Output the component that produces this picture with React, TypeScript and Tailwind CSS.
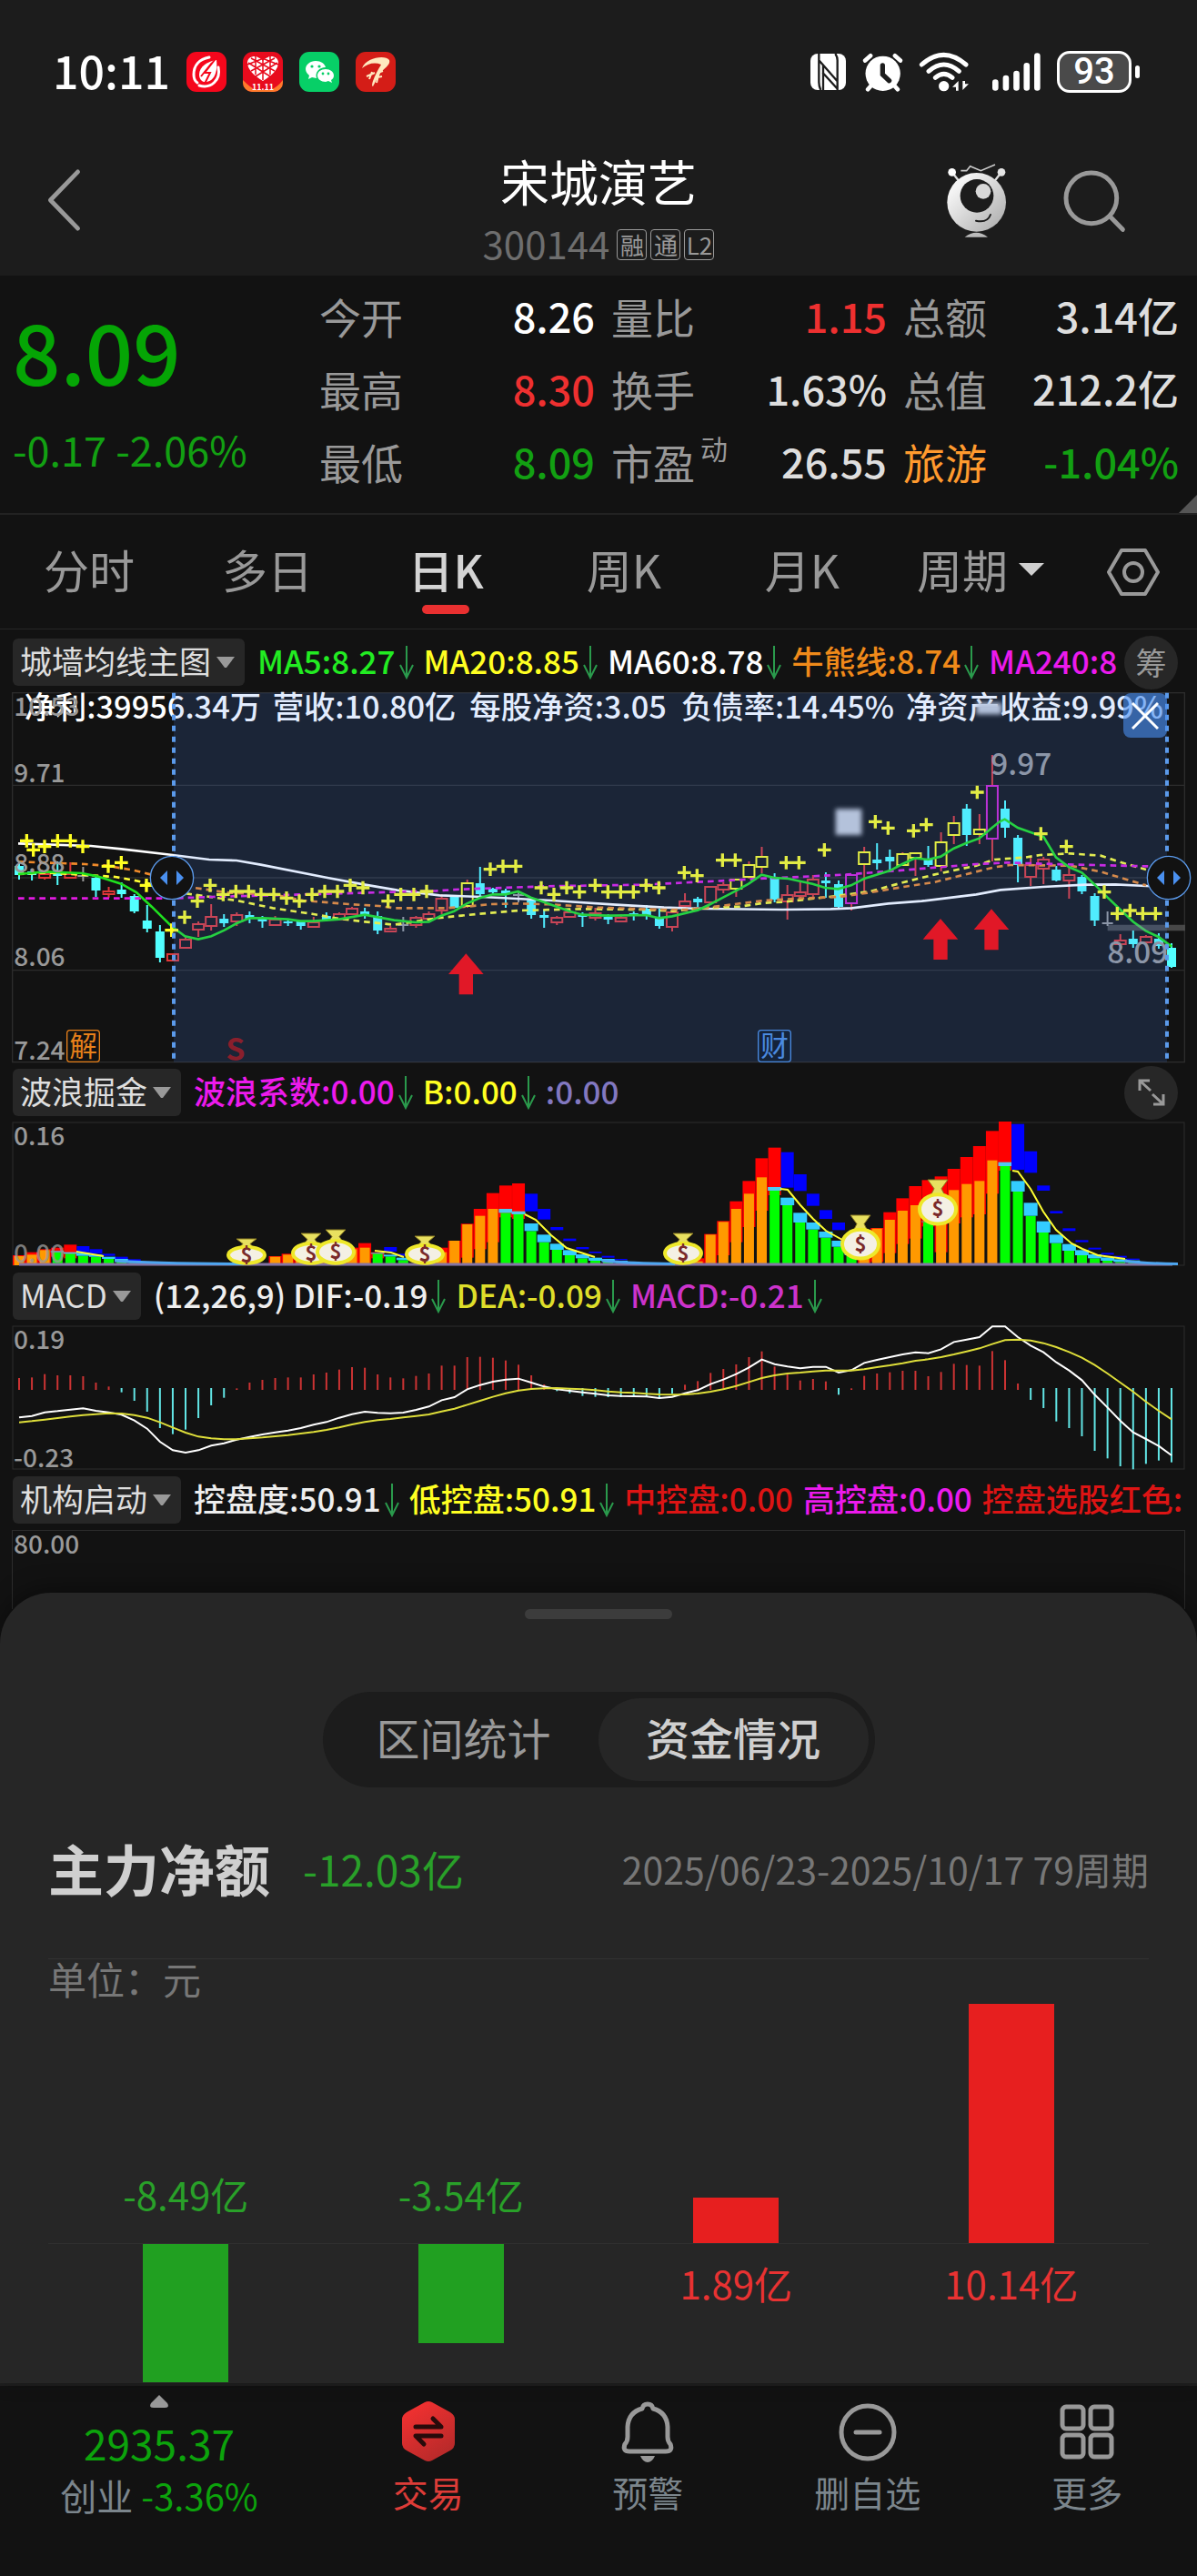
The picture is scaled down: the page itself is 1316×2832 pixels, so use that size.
import type { ReactNode } from "react";

const QUOTES = [
  { label: "今开", value: "8.26", color: "text-white" },
  { label: "量比", value: "1.15", color: "text-[#ee3030]" },
  { label: "总额", value: "3.14亿", color: "text-[#dedede]" },
  { label: "最高", value: "8.30", color: "text-[#ee3030]" },
  { label: "换手", value: "1.63%", color: "text-[#dedede]" },
  { label: "总值", value: "212.2亿", color: "text-[#dedede]" },
  { label: "最低", value: "8.09", color: "text-[#12a012]" },
  { label: "市盈", sup: "动", value: "26.55", color: "text-[#dedede]" },
  { label: "旅游", hot: true, value: "-1.04%", color: "text-[#12a012]" },
];

const TABS = ["分时", "多日", "日K", "周K", "月K"];

const REPORT = [
  { x: 80, text: "净利:39956.34万" },
  { x: 899, text: "营收:10.80亿" },
  { x: 1549, text: "每股净资:3.05" },
  { x: 2247, text: "负债率:14.45%" },
  { x: 2988, text: "净资产收益:9.99%" },
];

// kind, body top, body bottom, wick top, wick bottom
type Candle = [string, number, number, number, number];
const CANDLES: Candle[] = [
  ["c", 952, 962, 948, 967], ["c", 958, 962, 955, 968], ["r", 960, 965, 957, 967], ["c", 957, 963, 947, 973],
  ["r", 960, 965, 948, 965], ["g", 963, 964, 953, 969], ["c", 965, 979, 963, 986], ["r", 979, 983, 975, 987],
  ["c", 978, 983, 970, 987], ["c", 985, 1002, 983, 1004], ["c", 1012, 1021, 995, 1025], ["c", 1024, 1053, 1017, 1058],
  ["r", 1048, 1056, 1048, 1056], ["r", 1032, 1042, 1030, 1043], ["r", 1015, 1022, 1013, 1030], ["r", 1007, 1018, 994, 1023],
  ["c", 1010, 1015, 1005, 1019], ["r", 1005, 1013, 1003, 1018], ["c", 1006, 1010, 1002, 1015], ["c", 1010, 1013, 1007, 1020],
  ["r", 1010, 1017, 1007, 1017], ["c", 1013, 1015, 1010, 1018], ["c", 1013, 1018, 1012, 1022], ["r", 1013, 1019, 1008, 1020],
  ["c", 1007, 1011, 1003, 1013], ["r", 1004, 1011, 1003, 1012], ["r", 998, 1005, 997, 1006], ["c", 1002, 1007, 998, 1010],
  ["c", 1007, 1023, 1002, 1027], ["r", 1020, 1024, 1018, 1024], ["g", 1017, 1018, 1008, 1024], ["r", 1008, 1017, 1007, 1020],
  ["r", 1004, 1010, 1002, 1012], ["r", 987, 1001, 983, 1005], ["c", 986, 998, 986, 998], ["y", 970, 996, 967, 998],
  ["c", 971, 983, 953, 985], ["c", 977, 981, 976, 983], ["c", 979, 983, 977, 998], ["g", 984, 985, 980, 992],
  ["c", 990, 1006, 987, 1010], ["c", 1006, 1009, 1000, 1020], ["r", 1008, 1014, 1007, 1017], ["r", 1002, 1008, 1000, 1008],
  ["c", 1006, 1008, 1003, 1019], ["r", 1003, 1009, 998, 1012], ["c", 1008, 1011, 1005, 1016], ["r", 1008, 1013, 1005, 1014],
  ["c", 1004, 1007, 1002, 1012], ["c", 999, 1006, 995, 1011], ["c", 1008, 1018, 999, 1021], ["r", 1002, 1019, 1002, 1024],
  ["r", 990, 996, 982, 998], ["c", 988, 992, 986, 997], ["r", 974, 992, 974, 993], ["r", 972, 978, 970, 982],
  ["y", 966, 977, 966, 986], ["y", 950, 964, 947, 966], ["y", 941, 953, 931, 960], ["c", 965, 989, 960, 992],
  ["r", 983, 991, 973, 1011], ["r", 980, 985, 970, 987], ["r", 966, 983, 962, 987], ["c", 968, 971, 959, 987],
  ["c", 972, 997, 968, 1000], ["m", 961, 993, 961, 1001], ["y", 936, 950, 931, 980], ["c", 945, 949, 927, 956],
  ["c", 942, 947, 934, 957], ["y", 938, 951, 937, 952], ["y", 937, 943, 937, 963], ["c", 945, 951, 930, 953],
  ["y", 925, 952, 915, 958], ["y", 904, 918, 897, 928], ["c", 889, 918, 884, 930], ["y", 911, 917, 895, 928],
  ["m", 863, 922, 830, 947], ["c", 889, 910, 880, 921], ["c", 921, 951, 918, 970], ["r", 950, 964, 942, 974],
  ["r", 944, 955, 942, 972], ["c", 956, 968, 952, 969], ["r", 961, 968, 952, 988], ["c", 964, 980, 962, 983],
  ["c", 985, 1012, 982, 1018], ["g", 1015, 1016, 1002, 1018], ["r", 1033, 1038, 1027, 1042], ["c", 1032, 1038, 1023, 1042],
  ["r", 1029, 1036, 1028, 1038], ["c", 1032, 1040, 1026, 1043], ["c", 1042, 1063, 1037, 1064],
];

const PLUSES = [
  [88, 703], [110, 733], [147, 722], [190, 703], [232, 703], [273, 722], [357, 787], [400, 775], [483, 850], [566, 998],
  [609, 955], [651, 902], [693, 850], [736, 880], [778, 870], [820, 870], [861, 880], [903, 880], [945, 892], [987, 902],
  [1029, 880], [1071, 870], [1113, 870], [1155, 850], [1197, 858], [1280, 902], [1322, 880], [1365, 880], [1407, 870],
  [1617, 797], [1659, 787], [1701, 787], [1785, 858], [1827, 880], [1869, 858], [1911, 872], [1963, 850], [2005, 872],
  [2047, 872], [2089, 872], [2131, 850], [2173, 858], [2257, 808], [2299, 818], [2383, 767], [2425, 767], [2593, 775],
  [2635, 775], [2719, 733], [2887, 640], [2929, 661], [3013, 670], [3055, 650], [3223, 543], [3433, 680], [3517, 722],
  [3642, 872], [3685, 943], [3727, 933], [3769, 943], [3811, 943],
];

const MA60 =
  "60,712 300,720 400,730 570,750 690,765 780,768 860,782 1080,825 1200,847 1310,866 1450,883 1590,888 1820,900 2020,913 2190,923 2320,927 2580,930 2740,928 2810,925 2930,910 3040,902 3140,890 3220,880 3300,865 3440,855 3580,848 3680,847 3780,852 3860,855";
const MA5 =
  "60,813 150,805 270,810 320,820 400,845 450,873 500,920 566,985 610,1018 654,1028 697,1018 740,998 781,975 823,958 870,958 950,962 992,968 1034,968 1118,962 1203,947 1300,965 1372,972 1415,970 1455,950 1498,935 1540,910 1582,892 1625,880 1667,880 1709,870 1751,890 1794,905 1836,920 1878,935 1920,947 2005,950 2131,948 2173,958 2217,952 2301,932 2343,912 2385,890 2427,868 2469,845 2512,815 2554,825 2600,828 2680,845 2722,858 2764,862 2807,850 2850,828 2934,802 2976,780 3018,760 3061,765 3103,755 3146,728 3188,710 3230,695 3272,660 3297,640 3314,632 3357,660 3442,690 3483,758 3526,790 3568,808 3611,848 3653,890 3695,930 3737,970 3779,1000 3821,1020 3864,1052";
const MA20 =
  "60,813 150,808 270,815 380,822 440,833 520,850 620,878 780,900 900,925 1034,945 1118,960 1203,970 1300,980 1440,958 1570,945 1710,933 1920,928 2120,930 2220,935 2320,925 2440,920 2520,908 2580,905 2760,885 2870,870 2980,840 3080,815 3220,785 3280,765 3380,758 3430,750 3530,745 3630,752 3700,775 3780,798";
const BULL =
  "60,772 280,780 350,785 440,800 500,815 640,858 760,875 900,880 1000,900 1150,912 1250,918 1300,925 1470,925 1540,920 1620,912 1710,910 1820,913 1970,923 2170,930 2270,930 2360,920 2520,900 2640,893 2770,888 2860,875 2980,855 3080,840 3180,815 3280,790 3330,783 3530,785 3630,805 3780,850";
const MA240 =
  "60,893 560,893 700,888 1000,880 1190,875 1440,868 1520,863 1800,853 2120,848 2380,835 2520,827 2640,822 2780,815 2980,800 3220,780 3320,775 3480,780 3780,787 3864,790";

// index, red top, orange top
const RISES = [
  [0, 660, 663], [1, 650, 658], [2, 640, 643], [20, 663, 665], [21, 655, 658], [22, 650, 655], [24, 640, 650], [25, 645, 650],
  [26, 635, 640], [27, 620, 635], [33, 635, 650], [34, 612, 612], [35, 556, 558], [36, 507, 530], [37, 455, 507],
  [53, 670, 680], [54, 590, 592], [55, 547, 550], [56, 482, 507], [57, 415, 457], [58, 340, 403], [66, 650, 665],
  [67, 570, 572], [68, 518, 543], [69, 472, 513], [70, 432, 495], [72, 400, 540], [73, 375, 445], [74, 336, 425],
  [75, 300, 415], [76, 250, 347],
];
// index, red top, cyan top, cyan bottom
const PEAKS = [
  [3, 635, 646, 650], [4, 625, 650, 655], [28, 650, 652, 655], [38, 430, 507, 520], [39, 423, 515, 525],
  [59, 305, 435, 447], [71, 412, 548, 550], [77, 219, 353, 366],
];
// index, blue top, blue bottom, cyan top, cyan bottom
const FALLS = [
  [5, 630, 650, 652, 662], [6, 640, 655, 658, 665], [7, 655, 662, 665, 672], [8, 665, 672, 672, 680], [9, 673, 678, 678, 685],
  [29, 633, 648, 658, 664], [30, 655, 662, 668, 676], [40, 457, 515, 555, 580], [41, 507, 542, 592, 617],
  [42, 567, 577, 622, 642], [43, 605, 613, 643, 660], [44, 633, 640, 657, 670], [45, 648, 653, 668, 678],
  [46, 662, 668, 672, 680], [47, 672, 676, 678, 684], [60, 320, 437, 470, 495], [61, 393, 448, 520, 552],
  [62, 457, 497, 552, 575], [63, 511, 540, 582, 602], [64, 552, 577, 612, 632], [65, 620, 624, 645, 660],
  [78, 227, 378, 415, 450], [79, 317, 388, 487, 530], [80, 430, 447, 548, 585], [81, 514, 522, 592, 620],
  [82, 571, 580, 623, 645], [83, 610, 617, 643, 660], [84, 635, 641, 657, 670], [85, 652, 658, 667, 678],
  [86, 662, 668, 673, 682], [87, 671, 675, 677, 684],
];
const BAGS = [
  [271, 1362, 1389], [342, 1356, 1389], [369, 1352, 1389], [467, 1359, 1389], [751, 1356, 1389], [946, 1336, 1384], [1031, 1297, 1346],
];

const HIST = [
  375, 373, 362, 366, 366, 369, 390, 403, 422, 450, 486, 540, 560, 545, 507, 465, 440, 409, 390, 381, 375, 373, 373, 363, 357,
  347, 339, 341, 363, 373, 376, 368, 360, 334, 334, 306, 305, 308, 317, 331, 366, 396, 418, 425, 434, 437, 438, 438, 436, 436,
  440, 426, 397, 385, 358, 345, 330, 306, 287, 337, 363, 383, 378, 386, 430, 409, 368, 360, 356, 351, 351, 369, 355, 328, 332,
  334, 286, 316, 393, 447, 474, 518, 540, 567, 615, 640, 666, 676, 658, 647, 653,
];
const DIF = [
  505, 500, 488, 484, 479, 475, 483, 488, 496, 515, 542, 585, 613, 621, 613, 598, 590, 578, 569, 561, 554, 548, 540, 529, 520,
  506, 494, 486, 490, 491, 489, 480, 469, 448, 438, 412, 398, 387, 380, 377, 390, 403, 412, 417, 422, 427, 432, 434, 435, 436,
  441, 437, 425, 415, 395, 380, 362, 340, 314, 329, 337, 343, 338, 338, 357, 349, 325, 315, 306, 297, 290, 293, 280, 256, 248,
  240, 205, 205, 240, 268, 290, 323, 350, 382, 430, 472, 516, 554, 576, 599, 630,
];
const DEA = [
  521, 517, 512, 507, 502, 497, 494, 491, 492, 497, 506, 521, 538, 555, 568, 574, 577, 577, 574, 571, 567, 563, 558, 553, 546,
  538, 528, 520, 514, 510, 505, 500, 495, 485, 476, 463, 450, 437, 425, 416, 411, 409, 408, 410, 412, 415, 419, 422, 424, 427,
  429, 430, 429, 426, 420, 412, 401, 388, 375, 366, 360, 357, 353, 350, 350, 350, 346, 339, 333, 326, 318, 313, 306, 297, 287,
  277, 263, 250, 248, 251, 260, 273, 289, 308, 332, 360, 390, 420, 453, 483, 511,
];

const FLOWS = [
  { value: "-8.49亿", height: 170 },
  { value: "-3.54亿", height: 109 },
  { value: "1.89亿", height: 50 },
  { value: "10.14亿", height: 264 },
];

const dayX = (i: number) => 21 + 14.078 * i;

function StatusBar() {
  return (
    <div className="flex items-center justify-between pt-[53px] pr-[63px] pl-[58px]">
      <div className="flex items-center gap-[18px]">
        <span className="pb-[6px] text-[50px] leading-[46px] font-medium text-white">10:11</span>
        <svg viewBox="0 0 44 44" className="h-11 w-11">
          <rect width="44" height="44" rx="11" fill="#f5071c" />
          <path d="M25 6C14 8 8 15 8 25c0 4 1 7 4 9M14 37c13 4 24-6 21-20" fill="none" stroke="#fff" strokeWidth="3" strokeLinecap="round" />
          <path d="M33 9c-9 1-19 7-19 16 0 4 2 7 5 8 8 1 16-6 14-24z" fill="#fff" />
          <path d="M34 5 20 23h6l-6 12M28 12l-12 15" fill="none" stroke="#f5071c" strokeWidth="2" />
        </svg>
        <svg viewBox="0 0 44 44" className="h-11 w-11">
          <rect width="44" height="44" rx="11" fill="#e80b1d" />
          <path d="M0 31q8 8 14 11h16q8-3 14-11v3a10 10 0 0 1-10 10H10A10 10 0 0 1 0 34z" fill="#ff7a2c" />
          <path d="M22 32C12 26 5 19 5 12c0-8 12-10 17-2 5-8 17-6 17 2 0 7-7 14-17 20z" fill="#fff" />
          <path d="M6 12l24 15M9 7l26 14M16 5l23 9M38 12 14 27M35 7 9 21M28 5 5 14M22 5v26M14 5v20M30 5v20" stroke="#e80b1d" strokeWidth="1.500" fill="none" />
          <text x="22" y="42" textAnchor="middle" fontSize="9" fontWeight="700" fill="#fff">11.11</text>
        </svg>
        <svg viewBox="0 0 44 44" className="h-11 w-11">
          <rect width="44" height="44" rx="11" fill="#07cf67" />
          <path d="M18 10c-6 0-11 4-11 9 0 3 2 5 4 7l-1 4 4-2 5 1c-2-7 3-12 10-12-1-4-5-7-11-7z" fill="#fff" />
          <path d="M29 19c-5 0-9 3-9 7s4 7 9 7l3-1 4 2-1-3c2-1 3-3 3-5 0-4-4-7-9-7z" fill="#fff" />
          <circle cx="14" cy="16" r="1.6" fill="#07cf67" /><circle cx="22" cy="16" r="1.6" fill="#07cf67" />
          <circle cx="26" cy="24" r="1.4" fill="#07cf67" /><circle cx="32" cy="24" r="1.4" fill="#07cf67" />
        </svg>
        <svg viewBox="0 0 44 44" className="h-11 w-11">
          <rect width="44" height="44" rx="11" fill="#d41d17" />
          <path d="M7 18C11 6 33 3 37 9c2 6-7 9-11 16l-7 13c-3-1 3-14 9-24-7-3-15-1-21 4z" fill="#ffe9bf" />
          <path d="M12 27l9-4M18 22l-3 8M24 23l6-2M24 28l5-1M26 22l-3 12" fill="none" stroke="#ffe9bf" strokeWidth="2" />
        </svg>
      </div>
      <div className="flex items-center">
        <svg viewBox="0 0 117 120" className="h-10 w-[39px]">
          <rect width="117" height="120" rx="24" fill="#fff" />
          <path d="M28 0v94q0 14 6 26M28 22l62 70M42 40v80M82 0q7 10 7 22v98M40 62l50 55" fill="none" stroke="#1c1c1c" strokeWidth="7" />
        </svg>
        <svg viewBox="213 52 135 130" className="ml-[18px] h-[43px] w-[45px]">
          <path d="M222 78l18-16M339 78l-18-16M243 160l-12 14M318 160l12 14" stroke="#fff" strokeWidth="14" strokeLinecap="round" />
          <circle cx="281" cy="121" r="58" fill="#fff" />
          <path d="M280 94v30l22 21" fill="none" stroke="#1c1c1c" strokeWidth="16" strokeLinecap="round" />
        </svg>
        <svg viewBox="400 48 168 132" className="ml-[17px] h-11 w-14">
          <g fill="none" stroke="#fff" strokeWidth="15" strokeLinecap="round">
            <path d="M410 90q72-64 146 0M433 112q50-44 100 0M455 133q28-24 56 0" />
          </g>
          <circle cx="483" cy="161" r="17" fill="#fff" />
          <path d="M511 164l20-20v32h-8v-12zM565 154l-20 20v-30h8v10z" fill="#fff" />
        </svg>
        <svg viewBox="0 0 160 126" className="ml-[25px] h-[42px] w-[53px]">
          <path d="M10 98v18M45 84v32M80 69v47M114 43v73M149 10v106" stroke="#fff" strokeWidth="20" strokeLinecap="round" />
        </svg>
        <div className="ml-[18px] flex h-[46px] w-[82px] items-center justify-center rounded-[14px] border-[3px] border-white bg-[#4a4a4a] font-['Roboto',sans-serif] text-[40px] leading-[40px] font-medium text-white">93</div>
        <div className="ml-1 h-[14px] w-[5px] rounded-full bg-white" />
      </div>
    </div>
  );
}

function TitleBar() {
  return (
    <div className="grid grid-cols-[1fr_auto_1fr] items-start px-[50px] pt-[62px] pb-1">
      <button aria-label="返回" className="justify-self-start pt-[18px]">
        <svg viewBox="0 0 40 72" className="h-[70px] w-10">
          <path d="M36 4 5 36l31 32" fill="none" stroke="#999" strokeWidth="5" strokeLinecap="round" strokeLinejoin="round" />
        </svg>
      </button>
      <div className="flex flex-col items-center">
        <h1 className="text-[54px] leading-[64px] font-normal text-white">宋城演艺</h1>
        <div className="mt-1 flex items-center gap-1">
          <span className="mr-1 text-[42px] leading-[64px] text-[#6e6e6e]">300144</span>
          {["融", "通", "L2"].map((t) => (
            <span key={t} className="mt-1 flex h-[34px] w-[33px] items-center justify-center rounded-[4px] border border-[#999] text-[26px] leading-[26px] text-[#999]">{t}</span>
          ))}
        </div>
      </div>
      <div className="mr-7 flex items-center gap-[62px] justify-self-end pt-[13px]">
        <button aria-label="助手">
          <svg viewBox="498 418 196 246" className="h-[82px] w-[66px]">
            <defs>
              <linearGradient id="bot" x1="0" y1="0" x2="1" y2="1">
                <stop offset="0.2" stopColor="#f4f4f4" />
                <stop offset="1" stopColor="#a8a8a8" />
              </linearGradient>
            </defs>
            <path d="M514 446l22 28M677 446l-22 28" stroke="#ddd" strokeWidth="7" />
            <circle cx="514" cy="446" r="13" fill="#fff" /><circle cx="677" cy="446" r="13" fill="#e4e4e4" />
            <path d="M543 441h19l12-15 35 15 47-20" fill="none" stroke="#ccc" strokeWidth="5" />
            <circle cx="595" cy="545" r="97" fill="url(#bot)" />
            <circle cx="596" cy="524" r="55" fill="#1c1c1c" />
            <circle cx="617" cy="509" r="25" fill="#d8d8d8" />
            <path d="M593 606q38 8 48-20" fill="none" stroke="#1c1c1c" strokeWidth="6" strokeLinecap="round" />
            <path d="M556 660q38-30 76 0z" fill="#bbb" />
          </svg>
        </button>
        <button aria-label="搜索">
          <svg viewBox="880 438 208 208" className="h-[69px] w-[69px]">
            <circle cx="973" cy="531" r="84" fill="none" stroke="#999" strokeWidth="15" />
            <path d="M1035 592l42 43" stroke="#999" strokeWidth="15" strokeLinecap="round" />
          </svg>
        </button>
      </div>
    </div>
  );
}

function Down() {
  return (
    <svg viewBox="0 0 16 37" className="mt-1 h-[37px] w-4 shrink-0">
      <path d="M8 0v34M1 21l7 14 7-14" fill="none" stroke="#2a9a4c" strokeWidth="2" />
    </svg>
  );
}

type Item = { text: string; color: string; down?: boolean };

function PanelHeader({ name, items, children }: { name: string; items: Item[]; children?: ReactNode }) {
  return (
    <div className="flex items-center gap-[14px] py-[7px] pl-[14px]">
      <button className="flex h-[52px] shrink-0 items-center gap-[5px] rounded-md bg-[#272727] pr-[10px] pb-1 pl-2 text-[35px] leading-[48px] text-[#dedede]">
        {name}
        <svg viewBox="0 0 22 13" className="mt-1 h-[13px] w-[22px]"><path d="M1 0h20L12 12h-2z" fill="#999" /></svg>
      </button>
      <ul className="flex h-[52px] min-w-0 flex-1 items-center gap-[11px] overflow-hidden pb-1 text-[35px] leading-[48px] font-medium whitespace-nowrap">
        {items.map((it) => (
          <li key={it.text} className={`flex shrink-0 items-center gap-1 ${it.color}`}>
            {it.text}
            {it.down && <Down />}
          </li>
        ))}
      </ul>
      {children}
    </div>
  );
}

function Handle({ x }: { x: number }) {
  return (
    <g transform={`translate(${x} 825)`}>
      <circle r="71" fill="#121212" stroke="#5b9aeb" strokeWidth="4" />
      <path d="M-39 0l24-24v48zM39 0 15-24v48z" fill="#4a90f0" />
    </g>
  );
}

const HOLLOW: Record<string, string> = { r: "#e03838", y: "#ffff22", m: "#d022d0" };

function CandleChart() {
  return (
    <svg viewBox="39 213 3870 1221" className="block w-full overflow-visible">
      <g fill="none" stroke="#2c2c2c" strokeWidth="4">
        <rect x="41" y="215" width="3866" height="1218" />
        <path d="M41 520h3866M41 825h3866M41 1130h3866" />
      </g>
      <g fontSize="103" fontWeight="500" fill="#fff">
        {REPORT.map((r) => <text key={r.text} x={r.x} y="299">{r.text}</text>)}
      </g>
      <g transform="translate(0 -2070) scale(3)">
        {CANDLES.map(([kind, top, bottom, high, low], i) => {
          const x = dayX(i);
          if (kind === "g") return <path key={i} d={`M${x} ${high}V${low}M${x - 6} ${top}h12`} stroke="#999" strokeWidth="2" />;
          if (kind === "c")
            return (
              <g key={i} fill="#52ffff">
                <rect x={x - 1} y={high} width="2" height={low - high} />
                <rect x={x - 5} y={top} width="10" height={bottom - top} />
              </g>
            );
          return (
            <g key={i} fill="none" strokeWidth="2">
              <path d={`M${x} ${high}V${top}M${x} ${bottom}V${low}`} stroke="#e03838" />
              <rect x={x - 6} y={top + 1} width="12" height={bottom - top - 1} stroke={HOLLOW[kind]} />
            </g>
          );
        })}
      </g>
      <g fill="none" strokeWidth="8">
        <polyline points={MA60} stroke="#fff" />
        <polyline points={MA20} stroke="#ffff33" strokeDasharray="20 15" />
        <polyline points={BULL} stroke="#f08a2a" strokeDasharray="20 15" />
        <polyline points={MA240} stroke="#e01ae0" strokeDasharray="20 15" />
        <polyline points={MA5} stroke="#1fe01f" />
      </g>
      <path d={PLUSES.map(([x, y]) => `M${x - 22} ${y}h44M${x} ${y - 22}v44`).join("")} stroke="#ffff22" strokeWidth="10" />
      <g fontSize="84" fontWeight="500" fill="#999">
        <text x="46" y="290">10.53</text>
        <text x="46" y="510">9.71</text>
        <text x="46" y="808">8.88</text>
        <text x="46" y="1117">8.06</text>
        <text x="46" y="1424">7.24</text>
      </g>
      <g fontSize="100" fontWeight="500" fill="#999">
        <text x="3268" y="487">9.97</text>
        <text x="3652" y="1108">8.09</text>
      </g>
      <path d="M3653 990h255" stroke="#999" strokeOpacity="0.4" strokeWidth="20" />
      <defs>
        <filter id="soft"><feGaussianBlur stdDeviation="8" /></filter>
      </defs>
      <g fill="#c9cdd6" filter="url(#soft)">
        <rect x="2756" y="598" width="86" height="86" />
        <rect x="3220" y="248" width="84" height="38" />
      </g>
      <rect x="573" y="215" width="3276" height="1218" fill="#4a89f9" fillOpacity="0.16" />
      <text x="745" y="1428" fontSize="102" fontWeight="700" fill="#8a1f2c">S</text>
      <g fill="#e11827">
        {[[1537, 1075], [3102, 960], [3270, 928]].map(([x, y]) => (
          <path key={x} d={`M${x} ${y}l58 68h-35v67h-46v-67h-35z`} />
        ))}
      </g>
      <path d="M573 215V1433M3849 215V1433" stroke="#5b9aeb" strokeWidth="12" strokeDasharray="18 18" />
      <g fontSize="92" textAnchor="middle" strokeWidth="4">
        <rect x="221" y="1328" width="107" height="104" rx="10" fill="#121212" stroke="#e8801a" />
        <text x="275" y="1413" fill="#e8801a">解</text>
        <rect x="2501" y="1328" width="107" height="104" rx="10" fill="#14233a" stroke="#4a8ae0" />
        <text x="2555" y="1413" fill="#4a8ae0">财</text>
      </g>
      <Handle x={567} />
      <Handle x={3855} />
    </svg>
  );
}

function WaveChart() {
  const y = (v: number) => 1160 + v / 3;
  const bar = (key: string, i: number, top: number, bottom: number, w: number, fill: string) => (
    <rect key={key} x={dayX(i) - w / 2} y={y(top)} width={w} height={(bottom - top) / 3} fill={fill} />
  );
  return (
    <svg viewBox="13 1234 1290 158" className="block w-full overflow-visible">
      <rect x="14" y="1234" width="1288" height="157" fill="none" stroke="#2c2c2c" />
      {RISES.map(([i, red, orange]) => [
        bar(`r${i}`, i, red, Math.min(orange + 110, 693), 14, "#f00"),
        bar(`o${i}`, i, orange, 693, 11, "#ff9900"),
      ])}
      {PEAKS.map(([i, red, top, bottom]) => [
        bar(`r${i}`, i, red, bottom + 15, 14, "#f00"),
        bar(`g${i}`, i, bottom, 693, 11, "#0f0"),
        bar(`c${i}`, i, top, bottom, 15, "#50c8f0"),
      ])}
      {FALLS.map(([i, b1, b2, c1, c2]) => [
        bar(`b${i}`, i, b1, b2, 14, "#00f"),
        bar(`g${i}`, i, c2, 693, 11, "#0f0"),
        bar(`c${i}`, i, c1, c2, 15, "#33ccff"),
      ])}
      <path d="M21 1390h1268" stroke="#8474a4" strokeWidth="3" />
      <path d="M126 1386q40 3 142 3.500M662 1386q30 3 80 3.500M1236 1386q20 3 59 3.500" fill="none" stroke="#4da6f0" strokeWidth="3" />
      <g fill="none" stroke="#ffff33" strokeWidth="2">
        <path d="M84 1376l30 5M412 1375l18 2 14 5M577 1335l12 6 17 17 17 14 31 10" />
        <path d="M858 1307l8 1 14 17 14 15 14 13 18 10M1113 1287l6 1 14 19 14 25 14 20 17 15 12 6 17 7 30 4" />
      </g>
      {BAGS.map(([x, top, bottom]) => {
        const h = bottom - top;
        return (
          <g key={x}>
            <path d={`M${x - 11} ${top}h22l-7 ${h * 0.2} 5 ${h * 0.2}h-18l5 ${-h * 0.2}z`} fill="#e8e060" stroke="#8a7a20" strokeWidth="1" />
            <ellipse cx={x} cy={bottom - h * 0.34} rx="20" ry={h * 0.33} fill="#f4f0e4" stroke="#eee82a" strokeWidth="4" />
            <text x={x} y={bottom - h * 0.34 + 8} textAnchor="middle" fontSize="22" fontWeight="700" fill="#7a2a2a">$</text>
          </g>
        );
      })}
      <g fontSize="28" fontWeight="500" fill="#999">
        <text x="15" y="1259">0.16</text>
        <text x="15" y="1388" fillOpacity="0.8">0.00</text>
      </g>
    </svg>
  );
}

function MacdChart() {
  const points = (vals: number[]) => vals.map((v, i) => `${dayX(i)},${1390 + v / 3}`).join(" ");
  return (
    <svg viewBox="13 1458 1290 158" className="block w-full overflow-visible">
      <rect x="14" y="1458" width="1288" height="157" fill="none" stroke="#2c2c2c" />
      {HIST.map((v, i) =>
        v < 412 ? (
          <path key={i} d={`M${dayX(i)} ${1390 + v / 3}V1528`} stroke="#cc3333" strokeWidth="2" />
        ) : (
          <path key={i} d={`M${dayX(i)} 1526V${1390 + v / 3}`} stroke="#62e6e6" strokeWidth="2" />
        )
      )}
      <polyline points={points(DIF)} fill="none" stroke="#fff" strokeWidth="2" />
      <polyline points={points(DEA)} fill="none" stroke="#dede3a" strokeWidth="2" />
      <g fontSize="28" fontWeight="500" fill="#999">
        <text x="15" y="1483">0.19</text>
        <text x="15" y="1613">-0.23</text>
      </g>
    </svg>
  );
}

function FlowSheet() {
  return (
    <section className="relative -mt-[18px] flex-1 rounded-t-[56px] bg-[#262626] px-[53px] pt-[18px] shadow-[0_-6px_24px_rgba(0,0,0,0.35)]">
      <div className="mx-auto h-[11px] w-[162px] rounded-full bg-[#3c3c3c]" />
      <div className="mx-auto mt-20 flex w-fit rounded-full bg-[#1c1c1c] p-[7px]">
        <button className="h-[91px] w-[296px] rounded-full pb-2 text-[48px] leading-[76px] text-[#999]">区间统计</button>
        <button className="h-[91px] w-[297px] rounded-full bg-[#262626] pb-2 text-[48px] leading-[76px] font-medium text-[#cfcfcf]">资金情况</button>
      </div>
      <div className="mt-[45px] flex items-center justify-between">
        <div className="flex items-center">
          <h2 className="text-[61px] leading-[88px] font-bold text-[#cfcfcf]">主力净额</h2>
          <span className="ml-9 text-[46px] leading-[88px] text-[#29a029]">-12.03亿</span>
        </div>
        <span className="text-[41px] leading-[88px] text-[#777]">2025/06/23-2025/10/17 79周期</span>
      </div>
      <div className="mt-[55px] border-t border-[#323232] pb-2 text-[42px] leading-[41px] text-[#777]">单位：元</div>
      <div className="grid grid-cols-4">
        {FLOWS.map((f) => {
          const out = f.value.startsWith("-");
          return (
            <div key={f.value} className="flex flex-col items-center text-[42px] leading-[60px]">
              <div className="flex h-[264px] w-full flex-col items-center justify-end border-b border-[#2f2f2f]">
                {out ? (
                  <span className="mb-6 text-[#29a029]">{f.value}</span>
                ) : (
                  <div className="w-[94px] bg-[#e71f1f]" style={{ height: f.height }} />
                )}
              </div>
              <div className="flex h-[152px] w-full flex-col items-center overflow-hidden">
                {out ? (
                  <div className="w-[94px] shrink-0 bg-[#21a021]" style={{ height: f.height }} />
                ) : (
                  <span className="mt-[13px] text-[#e83232]">{f.value}</span>
                )}
              </div>
            </div>
          );
        })}
      </div>
    </section>
  );
}

function NavButton({ label, color, children }: { label: string; color: string; children: ReactNode }) {
  return (
    <button className={`flex flex-1 flex-col items-center gap-1 text-[39px] leading-[56px] ${color}`}>
      {children}
      {label}
    </button>
  );
}

function BottomNav() {
  return (
    <nav className="flex h-[212px] shrink-0 items-start border-t-[3px] border-[#1f1f1f] bg-[#121212] pt-2">
      <a href="#index" className="flex w-[350px] flex-col items-center">
        <svg viewBox="0 0 24 14" className="mt-[2px] h-[14px] w-6"><path d="M12 0l9 9q3 5-3 5H6q-6 0-3-5z" fill="#999" /></svg>
        <span className="mt-2 text-[46px] leading-[60px] text-[#0ca30c]">2935.37</span>
        <span className="text-[40px] leading-[56px] whitespace-pre text-[#7b858c]">创业 <span className="text-[#0ca30c]">-3.36%</span></span>
      </a>
      <NavButton label="交易" color="text-[#dd3c38]">
        <svg viewBox="0 0 60 68" className="mt-2 h-[68px] w-[60px]">
          <defs>
            <linearGradient id="trade" x1="0" y1="0" x2="0.6" y2="1">
              <stop offset="0.2" stopColor="#ee3030" />
              <stop offset="1" stopColor="#b82a2a" />
            </linearGradient>
          </defs>
          <path d="M26 2q4-2 8 0l20 11q5 3 5 8v26q0 5-5 8L34 66q-4 2-8 0L6 55q-5-3-5-8V21q0-5 5-8z" fill="url(#trade)" />
          <path d="M16 29h28l-9-9M44 39H16l9 9" fill="none" stroke="#280b0b" strokeWidth="5" strokeLinecap="round" strokeLinejoin="round" />
        </svg>
      </NavButton>
      <NavButton label="预警" color="text-[#7b858c]">
        <svg viewBox="0 0 60 68" className="mt-2 h-[68px] w-[60px]">
          <path d="M30 4q5 0 6 5 15 4 16 20v11q0 5 3 8 3 8-5 8H10q-8 0-5-8 3-3 3-8V29Q9 13 24 9q1-5 6-5z" fill="none" stroke="#999" strokeWidth="5" strokeLinejoin="round" />
          <path d="M22 61h16q-3 7-8 7t-8-7z" fill="#999" />
        </svg>
      </NavButton>
      <NavButton label="删自选" color="text-[#7b858c]">
        <svg viewBox="0 0 68 68" className="mt-2 h-[68px] w-[68px]">
          <circle cx="34" cy="35" r="29" fill="none" stroke="#999" strokeWidth="5" />
          <path d="M21 35h26" stroke="#999" strokeWidth="5" strokeLinecap="round" />
        </svg>
      </NavButton>
      <NavButton label="更多" color="text-[#7b858c]">
        <svg viewBox="0 0 68 68" className="mt-2 h-[68px] w-[68px]">
          <g fill="none" stroke="#999" strokeWidth="5">
            <rect x="7" y="7" width="23" height="24" rx="4" /><rect x="38" y="7" width="23" height="24" rx="4" />
            <rect x="7" y="38" width="23" height="24" rx="4" /><rect x="38" y="38" width="23" height="24" rx="4" />
          </g>
        </svg>
      </NavButton>
    </nav>
  );
}

export default function App() {
  return (
    <div className="flex min-h-screen flex-col overflow-hidden bg-[#121212] font-['Noto_Sans_CJK_SC',sans-serif]">
      <header className="bg-[#1c1c1c]">
        <StatusBar />
        <TitleBar />
      </header>

      {/* quote summary */}
      <section className="relative flex border-b-2 border-[#222] pt-[4px] pb-[17px] pr-5">
        <div className="w-[351px] shrink-0 pl-[14px]">
          <div className="mt-[13px] text-[92px] leading-[128px] font-medium text-[#05a505]">8.09</div>
          <div className="mt-[14px] text-[45px] leading-[64px] whitespace-nowrap text-[#12a012]">-0.17 -2.06%</div>
        </div>
        <dl className="grid flex-1 grid-cols-3 gap-x-[18px] text-[46px] leading-[80px]">
          {QUOTES.map((q) => (
            <div key={q.label} className="flex justify-between whitespace-nowrap">
              <dt className={`flex items-start gap-[6px] ${q.hot ? "text-[#ff9a2e]" : "text-[#999]"}`}>
                {q.label}
                {q.sup && <span className="text-[30px] leading-[50px]">{q.sup}</span>}
              </dt>
              <dd className={`text-[45px] leading-[80px] font-medium ${q.color}`}>{q.value}</dd>
            </div>
          ))}
        </dl>
        <svg viewBox="0 0 20 20" className="absolute right-0 bottom-0 h-5 w-5"><path d="M20 0v20H0z" fill="#555" /></svg>
      </section>

      {/* period tabs */}
      <div className="flex border-b border-[#262626]">
        {TABS.map((t) => (
          <button key={t} className={`flex h-[125px] flex-[196] flex-col items-center pt-[21px] text-[50px] leading-[76px] ${t === "日K" ? "font-medium text-[#d4d4d4]" : "text-[#999]"}`}>
            {t}
            {t === "日K" && <span className="mt-[2px] h-[10px] w-[52px] rounded-full bg-[#e93030]" />}
          </button>
        ))}
        <button className="flex h-[125px] flex-[196] items-start justify-center gap-3 pt-[21px] text-[50px] leading-[76px] text-[#999]">
          周期
          <svg viewBox="0 0 28 14" className="mt-8 h-[14px] w-7"><path d="M0 0h28L14 14z" fill="#cfcfcf" /></svg>
        </button>
        <button aria-label="设置" className="flex h-[125px] flex-[140] items-center justify-center">
          <svg viewBox="0 0 58 52" className="h-[52px] w-[58px]">
            <path d="M16 2h26l14 24-14 24H16L2 26z" fill="none" stroke="#999" strokeWidth="4" strokeLinejoin="round" />
            <circle cx="29" cy="26" r="10" fill="none" stroke="#999" strokeWidth="4" />
          </svg>
        </button>
      </div>

      <main>
        <div className="pt-[3px]">
          <PanelHeader
            name="城墙均线主图"
            items={[
              { text: "MA5:8.27", color: "text-[#22ec22]", down: true },
              { text: "MA20:8.85", color: "text-[#ffff22]", down: true },
              { text: "MA60:8.78", color: "text-white", down: true },
              { text: "牛熊线:8.74", color: "text-[#f08a1a]", down: true },
              { text: "MA240:8", color: "text-[#ec1aec]" },
            ]}
          >
            <button className="-my-1 mr-[21px] -ml-[14px] flex h-[59px] w-[59px] shrink-0 items-center justify-center rounded-full bg-[#272727] text-[34px] leading-[50px] text-[#999]">筹</button>
          </PanelHeader>
          <div className="relative mx-[13px]">
            <CandleChart />
            <button aria-label="关闭" className="absolute top-px right-5 flex h-[49px] w-12 items-center justify-center rounded-lg bg-[#4a90f0]/60">
              <svg viewBox="0 0 30 30" className="h-[30px] w-[30px]"><path d="M1 1l28 28M29 1 1 29" stroke="#fff" strokeWidth="3" /></svg>
            </button>
          </div>
        </div>

        <PanelHeader
          name="波浪掘金"
          items={[
            { text: "波浪系数:0.00", color: "text-[#ec1aec]", down: true },
            { text: "B:0.00", color: "text-[#ffff22]", down: true },
            { text: ":0.00", color: "text-[#8278c0]" },
          ]}
        >
          <button aria-label="全屏" className="-my-1 mr-[21px] flex h-[59px] w-[59px] shrink-0 items-center justify-center rounded-full bg-[#272727]">
            <svg viewBox="0 0 32 32" className="h-8 w-8">
              <path d="M3 14V3h11M3 3l12 11M29 18v11H18M29 29 17 18" fill="none" stroke="#999" strokeWidth="3" />
            </svg>
          </button>
        </PanelHeader>
        <div className="mx-[13px]"><WaveChart /></div>

        <PanelHeader
          name="MACD"
          items={[
            { text: "(12,26,9) DIF:-0.19", color: "text-[#eee]", down: true },
            { text: "DEA:-0.09", color: "text-[#dede2a]", down: true },
            { text: "MACD:-0.21", color: "text-[#cc33cc]", down: true },
          ]}
        />
        <div className="mx-[13px]"><MacdChart /></div>

        <PanelHeader
          name="机构启动"
          items={[
            { text: "控盘度:50.91", color: "text-[#eee]", down: true },
            { text: "低控盘:50.91", color: "text-[#ffff22]", down: true },
            { text: "中控盘:0.00", color: "text-[#dd1414]" },
            { text: "高控盘:0.00", color: "text-[#ec1aec]" },
            { text: "控盘选股红色:", color: "text-[#dd1414]" },
          ]}
        />
        <div className="mx-[13px] h-[87px] border border-b-0 border-[#2c2c2c] pl-px text-[28px] leading-[26px] font-medium text-[#999]">80.00</div>
      </main>

      <FlowSheet />
      <BottomNav />
    </div>
  );
}
